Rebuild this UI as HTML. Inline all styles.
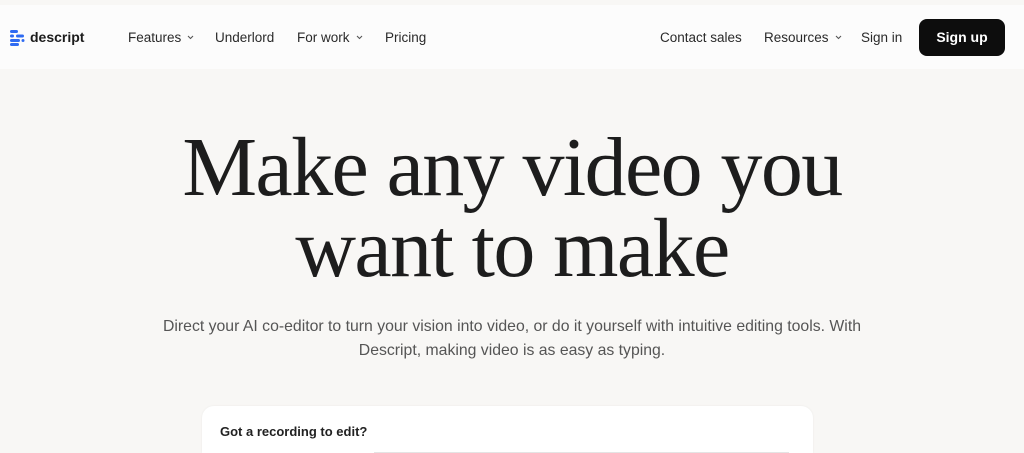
<!DOCTYPE html>
<html><head><meta charset="utf-8"><style>
*{margin:0;padding:0;box-sizing:border-box}
html,body{width:1024px;height:453px;overflow:hidden}
body{background:#f8f7f5;font-family:"Liberation Sans",sans-serif;color:#222;position:relative}
.nav{position:absolute;top:5px;left:0;width:1024px;height:64px;background:#fcfcfc}
.nav span{position:absolute;top:25px;font-size:13.5px;line-height:16px;color:#2a2a2a}
.nav svg.c{margin-left:6px;vertical-align:2px}
.btn{position:absolute;left:919px;top:14px;width:86px;height:37px;background:#0d0d0d;color:#fff;border-radius:8px;font-weight:bold;font-size:14px;text-align:center;line-height:37px}
h1{position:absolute;top:127px;left:0;width:1024px;text-align:center;font-family:"Liberation Serif",serif;font-weight:normal;font-size:84px;line-height:81px;letter-spacing:-1.6px;color:#1d1d1d}
p{position:absolute;top:315px;left:0;width:1024px;text-align:center;font-size:15.8px;line-height:24px;color:#555}
.card{position:absolute;left:202px;top:406px;width:611px;height:47px;background:#fff;border-radius:12px 12px 0 0;box-shadow:0 0 2px rgba(0,0,0,.06)}
.card b{position:absolute;left:18px;top:18px;font-size:13px;color:#222}
.card i{position:absolute;left:172px;top:46px;width:415px;height:1px;background:#e4e4e4}
</style></head><body>
<div class="nav">
<svg style="position:absolute;left:10px;top:25px" width="15" height="16" viewBox="0 0 15 16"><g fill="#2f6bf2"><rect x="0" y="0" width="8" height="3" rx="1.5"/><rect x="0" y="4.5" width="4" height="3" rx="1.5"/><rect x="6" y="4.5" width="8" height="3" rx="1.5"/><rect x="0" y="9" width="10" height="3" rx="1.5"/><rect x="11.5" y="9" width="3" height="3" rx="1.5"/><rect x="0" y="13" width="9" height="3" rx="1.5"/></g></svg>
<span style="left:30px;top:24px;font-weight:bold;font-size:14px;color:#1c1c1c">descript</span>
<span style="left:128px">Features<svg class="c" width="7" height="5" viewBox="0 0 7 5"><path d="M1 1l2.5 2.5L6 1" fill="none" stroke="#555" stroke-width="1.1"/></svg></span>
<span style="left:215px">Underlord</span>
<span style="left:297px">For work<svg class="c" width="7" height="5" viewBox="0 0 7 5"><path d="M1 1l2.5 2.5L6 1" fill="none" stroke="#555" stroke-width="1.1"/></svg></span>
<span style="left:385px">Pricing</span>
<span style="left:660px">Contact sales</span>
<span style="left:764px">Resources<svg class="c" width="7" height="5" viewBox="0 0 7 5"><path d="M1 1l2.5 2.5L6 1" fill="none" stroke="#555" stroke-width="1.1"/></svg></span>
<span style="left:861px">Sign in</span>
<div class="btn">Sign up</div>
</div>
<h1>Make any video you<br>want to make</h1>
<p>Direct your AI co-editor to turn your vision into video, or do it yourself with intuitive editing tools. With<br>Descript, making video is as easy as typing.</p>
<div class="card"><b>Got a recording to edit?</b><i></i></div>
</body></html>
